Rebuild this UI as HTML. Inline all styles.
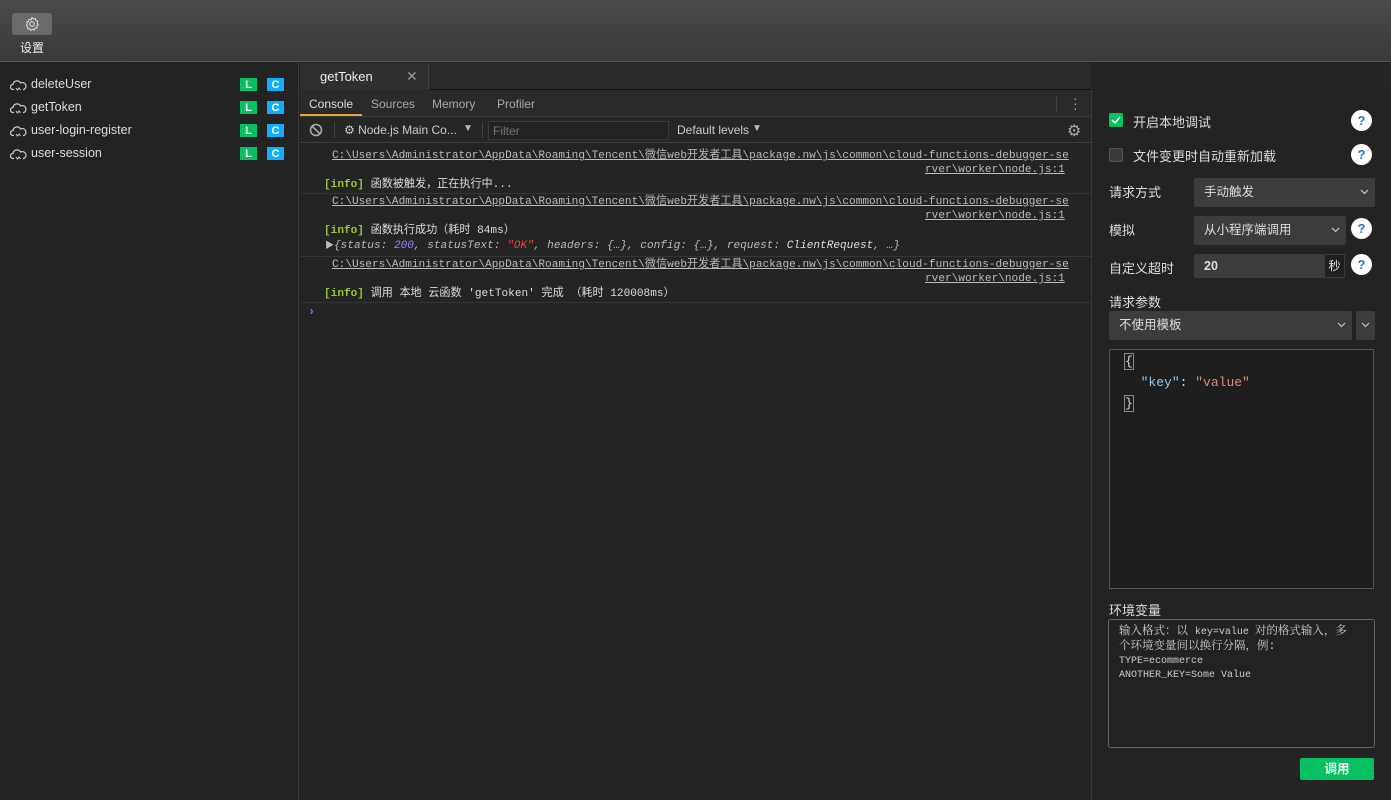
<!DOCTYPE html>
<html><head><meta charset="utf-8"><style>
*{box-sizing:border-box;margin:0;padding:0}
body{width:1391px;height:800px;overflow:hidden;background:#242424;font-family:"Liberation Sans","Noto Sans CJK SC",sans-serif;color:#ddd;position:relative}
.abs{position:absolute}
.top{left:0;top:0;width:1391px;height:62px;background:linear-gradient(#4b4b4b,#3a3a3a);border-bottom:1px solid #555}
.gear{left:12px;top:13px;width:40px;height:22px;background:#6a6a6a;border-radius:3px}
.left{left:0;top:63px;width:299px;height:737px;background:#232323;border-right:1px solid #3a3a3a}
.fn{position:absolute;left:10px;font-size:12.5px;color:#ddd;height:16px;line-height:16px}
.fn svg{vertical-align:-3px;margin-right:4px}
.b{position:absolute;width:17px;height:13px;font-size:11px;font-weight:bold;color:#fff;text-align:center;line-height:14px}
.mono{font-family:"Liberation Mono","Noto Sans CJK SC",monospace;font-size:11.1px}
.link{color:#bbb;text-decoration:underline;position:absolute;left:332px;white-space:nowrap;line-height:14px}
.sep{position:absolute;left:300px;width:791px;height:1px;background:#353535}
.info{position:absolute;left:324px;color:#ddd;font-size:11.1px;white-space:nowrap;line-height:14px}
.info b{color:#9bc537}
.q{position:absolute;left:1351px;width:21px;height:21px;border-radius:50%;background:#fff;color:#2a6ee8;font-weight:bold;font-size:13px;text-align:center;line-height:21px}
.lab{position:absolute;left:1109px;font-size:13px;color:#ddd}
.sel{position:absolute;background:#3c3c3c;border-radius:2px;font-size:12.5px;color:#ddd;padding-left:10px}
.chev{position:absolute;right:6px;top:50%;margin-top:-4px}
</style></head><body>
<div class="abs top"></div>
<div class="abs gear"><svg width="40" height="22" viewBox="0 0 40 22"><circle cx="20" cy="11" r="2.3" fill="none" stroke="#ddd" stroke-width="1.1"/><path d="M20 4.5l1.3 1.5 2-.5.5 2 1.9.8-.6 1.9 1.2 1.6-1.6 1.1.3 2-2 .3-.8 1.9-1.8-.9-1.7 1.2-1-1.8-2 .1.1-2-1.6-1.2 1.2-1.6-.7-1.9 1.9-.6.5-2 2 .5z" fill="none" stroke="#ddd" stroke-width="1"/></svg></div>
<div class="abs" style="left:20px;top:39px;font-size:12px;color:#eee">设置</div>

<div class="abs left"></div>
<div class="fn" style="top:76px"><svg width="17" height="12" viewBox="0 0 17 12"><path d="M4 10.5H3a2.5 2.5 0 0 1 0-5 4 4 0 0 1 7.5-1.5A3.2 3.2 0 0 1 14 10.5h-1" fill="none" stroke="#ccc" stroke-width="1.2"/><path d="M6 9l1.5 2 1.5-2 1.5 2" fill="none" stroke="#ccc"/></svg>deleteUser</div>
<div class="fn" style="top:99px"><svg width="17" height="12" viewBox="0 0 17 12"><path d="M4 10.5H3a2.5 2.5 0 0 1 0-5 4 4 0 0 1 7.5-1.5A3.2 3.2 0 0 1 14 10.5h-1" fill="none" stroke="#ccc" stroke-width="1.2"/><path d="M6 9l1.5 2 1.5-2 1.5 2" fill="none" stroke="#ccc"/></svg>getToken</div>
<div class="fn" style="top:122px"><svg width="17" height="12" viewBox="0 0 17 12"><path d="M4 10.5H3a2.5 2.5 0 0 1 0-5 4 4 0 0 1 7.5-1.5A3.2 3.2 0 0 1 14 10.5h-1" fill="none" stroke="#ccc" stroke-width="1.2"/><path d="M6 9l1.5 2 1.5-2 1.5 2" fill="none" stroke="#ccc"/></svg>user-login-register</div>
<div class="fn" style="top:145px"><svg width="17" height="12" viewBox="0 0 17 12"><path d="M4 10.5H3a2.5 2.5 0 0 1 0-5 4 4 0 0 1 7.5-1.5A3.2 3.2 0 0 1 14 10.5h-1" fill="none" stroke="#ccc" stroke-width="1.2"/><path d="M6 9l1.5 2 1.5-2 1.5 2" fill="none" stroke="#ccc"/></svg>user-session</div>
<div class="b" style="left:240px;top:78px;background:#07c160">L</div><div class="b" style="left:267px;top:78px;background:#10aeff">C</div>
<div class="b" style="left:240px;top:101px;background:#07c160">L</div><div class="b" style="left:267px;top:101px;background:#10aeff">C</div>
<div class="b" style="left:240px;top:124px;background:#07c160">L</div><div class="b" style="left:267px;top:124px;background:#10aeff">C</div>
<div class="b" style="left:240px;top:147px;background:#07c160">L</div><div class="b" style="left:267px;top:147px;background:#10aeff">C</div>

<div class="abs" style="left:300px;top:63px;width:791px;height:27px;background:#2b2b2b;border-bottom:1px solid #111"></div>
<div class="abs" style="left:300px;top:63px;width:129px;height:27px;background:#2f2f2f;border-right:1px solid #444"></div>
<div class="abs" style="left:320px;top:69px;font-size:13px;color:#eee">getToken</div>
<div class="abs" style="left:406px;top:68px;font-size:14px;color:#999">✕</div>
<div class="abs" style="left:300px;top:90px;width:791px;height:27px;background:#2a2a2a;border-bottom:1px solid #3e3e3e"></div>
<div class="abs" style="left:309px;top:97px;font-size:12px;color:#ddd">Console</div>
<div class="abs" style="left:300px;top:114px;width:62px;height:2px;background:#e8a33d"></div>
<div class="abs" style="left:371px;top:97px;font-size:12px;color:#aaa">Sources</div>
<div class="abs" style="left:432px;top:97px;font-size:12px;color:#aaa">Memory</div>
<div class="abs" style="left:497px;top:97px;font-size:12px;color:#aaa">Profiler</div>
<div class="abs" style="left:1056px;top:96px;width:1px;height:16px;background:#444"></div>
<div class="abs" style="left:1073px;top:96px;font-size:14px;color:#aaa;line-height:5px">·<br>·<br>·</div>
<div class="abs" style="left:300px;top:117px;width:791px;height:26px;background:#262626;border-bottom:1px solid #3e3e3e"></div>
<svg class="abs" style="left:309px;top:123px" width="14" height="14" viewBox="0 0 14 14"><circle cx="7" cy="7" r="5.5" fill="none" stroke="#aaa" stroke-width="1.6"/><path d="M3 3l8 8" stroke="#aaa" stroke-width="1.6"/></svg>
<div class="abs" style="left:334px;top:122px;width:1px;height:16px;background:#444"></div>
<div class="abs" style="left:344px;top:123px;font-size:12px;color:#ccc">⚙ Node.js Main Co...</div>
<div class="abs" style="left:463px;top:123px;font-size:10px;color:#bbb">▼</div>
<div class="abs" style="left:482px;top:122px;width:1px;height:16px;background:#444"></div>
<div class="abs" style="left:488px;top:121px;width:181px;height:19px;border:1px solid #3a3a3a;background:#222;font-size:12px;color:#777;padding:2px 4px">Filter</div>
<div class="abs" style="left:677px;top:123px;font-size:12px;color:#ccc">Default levels</div>
<div class="abs" style="left:752px;top:123px;font-size:10px;color:#bbb">▼</div>
<div class="abs" style="left:1067px;top:121px;font-size:16px;color:#aaa">⚙</div>
<div class="mono">
<div class="link" style="top:149px">C:\Users\Administrator\AppData\Roaming\Tencent\微信web开发者工具\package.nw\js\common\cloud-functions-debugger-se</div>
<div class="link" style="top:163px;left:925px">rver\worker\node.js:1</div>
<div class="info" style="top:178px"><b>[info]</b> 函数被触发，正在执行中...</div>
<div class="sep" style="top:193px"></div>
<div class="link" style="top:195px">C:\Users\Administrator\AppData\Roaming\Tencent\微信web开发者工具\package.nw\js\common\cloud-functions-debugger-se</div>
<div class="link" style="top:209px;left:925px">rver\worker\node.js:1</div>
<div class="info" style="top:224px"><b>[info]</b> 函数执行成功（耗时 84ms）</div>
<div class="info" style="top:239px;font-style:italic;color:#bbb;left:325px"><span style="font-style:normal;font-size:9px">▶</span>{status: <span style="color:#9980ff">200</span>, statusText: <span style="color:#e8473b">"OK"</span>, headers: {…}, config: {…}, request: <span style="color:#ddd">ClientRequest</span>, …}</div>
<div class="sep" style="top:256px"></div>
<div class="link" style="top:258px">C:\Users\Administrator\AppData\Roaming\Tencent\微信web开发者工具\package.nw\js\common\cloud-functions-debugger-se</div>
<div class="link" style="top:272px;left:925px">rver\worker\node.js:1</div>
<div class="info" style="top:287px"><b>[info]</b> 调用 本地 云函数 'getToken' 完成 （耗时 120008ms）</div>
<div class="sep" style="top:302px"></div>
<div class="abs" style="left:308px;top:305px;color:#4a8cf7;font-weight:bold;font-size:12px">›</div>
</div>

<div class="abs" style="left:1091px;top:90px;width:300px;height:710px;background:#232323;border-left:1px solid #3a3a3a"></div>
<div class="abs" style="left:1109px;top:113px;width:14px;height:14px;background:#07c160;border-radius:2px"><svg width="14" height="14" style="display:block"><path d="M3 7l3 3 5-6" fill="none" stroke="#fff" stroke-width="1.6"/></svg></div>
<div class="lab" style="top:112px;left:1133px">开启本地调试</div>
<div class="abs" style="left:1109px;top:148px;width:14px;height:14px;background:#3a3a3a;border:1px solid #555;border-radius:2px"></div>
<div class="lab" style="top:146px;left:1133px">文件变更时自动重新加载</div>
<div class="q" style="top:110px">?</div><div class="q" style="top:144px">?</div><div class="q" style="top:218px">?</div><div class="q" style="top:254px">?</div>
<div class="lab" style="top:182px">请求方式</div>
<div class="sel" style="left:1194px;top:178px;width:181px;height:29px;line-height:29px">手动触发<svg class="chev" width="9" height="6"><path d="M1 1l3.5 3.5L8 1" fill="none" stroke="#bbb" stroke-width="1.3"/></svg></div>
<div class="lab" style="top:220px">模拟</div>
<div class="sel" style="left:1194px;top:216px;width:152px;height:29px;line-height:29px">从小程序端调用<svg class="chev" width="9" height="6"><path d="M1 1l3.5 3.5L8 1" fill="none" stroke="#bbb" stroke-width="1.3"/></svg></div>
<div class="lab" style="top:258px">自定义超时</div>
<div class="sel" style="left:1194px;top:254px;width:130px;height:24px;line-height:24px;font-weight:bold">20</div>
<div class="abs" style="left:1324px;top:254px;width:21px;height:24px;border:1px solid #3c3c3c;background:#1f1f1f;font-size:12px;line-height:22px;text-align:center">秒</div>
<div class="lab" style="top:292px">请求参数</div>
<div class="sel" style="left:1109px;top:311px;width:243px;height:29px;line-height:29px">不使用模板<svg class="chev" width="9" height="6"><path d="M1 1l3.5 3.5L8 1" fill="none" stroke="#bbb" stroke-width="1.3"/></svg></div>
<div class="sel" style="left:1356px;top:311px;width:19px;height:29px;padding:0"><svg class="chev" style="right:5px" width="9" height="6"><path d="M1 1l3.5 3.5L8 1" fill="none" stroke="#bbb" stroke-width="1.3"/></svg></div>
<div class="abs" style="left:1109px;top:349px;width:265px;height:240px;border:1px solid #555;background:#1e1e1e"></div>
<div class="abs" style="left:1125px;top:351px;font-family:'Liberation Mono',monospace;font-size:13px;line-height:21px;color:#ddd;white-space:pre"><span style="outline:1px solid #888">{</span>
  <span style="color:#8fc7f5">"key"</span>: <span style="color:#ce9178">"value"</span>
<span style="outline:1px solid #888">}</span></div>
<div class="lab" style="top:600px">环境变量</div>
<div class="abs" style="left:1108px;top:619px;width:267px;height:129px;border:1px solid #666;border-radius:3px;background:#222;padding:5px 10px;font-family:'Liberation Mono','Noto Serif CJK SC',monospace;font-size:10px;line-height:14px;color:#ccc"><span style="font-size:11.5px">输入格式：以 </span>key=value <span style="font-size:11.5px">对的格式输入，多<br>个环境变量间以换行分隔，例:</span><br>TYPE=ecommerce<br>ANOTHER_KEY=Some Value</div>
<div class="abs" style="left:1300px;top:758px;width:74px;height:22px;background:#07c160;border-radius:2px;color:#fff;font-size:12.5px;font-weight:bold;text-align:center;line-height:22px">调用</div>
</body></html>
